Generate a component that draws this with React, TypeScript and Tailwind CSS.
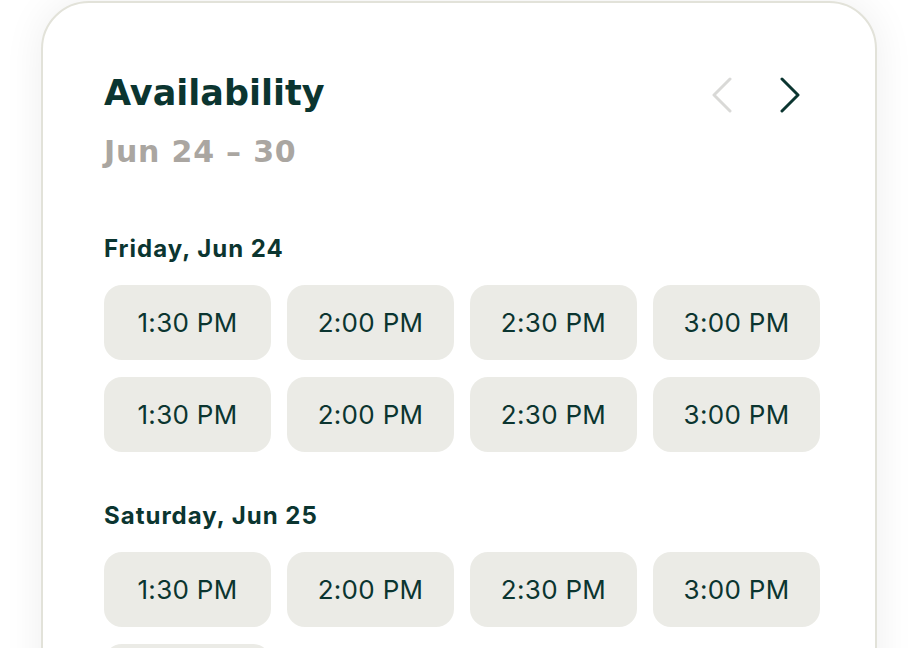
import React from 'react';

const slots = ['1:30 PM', '2:00 PM', '2:30 PM', '3:00 PM'];

const days = [
  { label: 'Friday, Jun 24', times: [...slots, ...slots] },
  { label: 'Saturday, Jun 25', times: [...slots, '1:30 PM'] },
];

function Chevron({ dir, color }: { dir: 'left' | 'right'; color: string }) {
  return (
    <svg width="22" height="36" viewBox="0 0 22 36" fill="none" stroke={color} strokeWidth="3" strokeLinecap="round" strokeLinejoin="round">
      {dir === 'left' ? <path d="M19 2 L3 18 L19 34" /> : <path d="M3 2 L19 18 L3 34" />}
    </svg>
  );
}

export default function App() {
  return (
    <div className="w-[918px] h-[648px] overflow-hidden bg-white">
      <div className="ml-[41px] mt-px w-[836px] h-[760px] bg-white border-2 border-[#e2e2d9] rounded-[48px] shadow-[0_0_40px_rgba(0,0,0,0.07)] pl-[61px] pr-[55px] pt-[73px]">
        {/* Header */}
        <div className="flex items-start justify-between">
          <div>
            <div className="text-[35px] leading-none font-bold text-[#0b3530]" style={{ fontFamily: '"DejaVu Sans", sans-serif' }}>
              Availability
            </div>
            <div className="mt-[26px] text-[30px] leading-none font-bold text-[#aaa6a1] tracking-[0.8px]" style={{ fontFamily: '"DejaVu Sans", sans-serif' }}>
              Jun 24 – 30
            </div>
          </div>
          <div className="flex items-center gap-[46px] pt-[1px] pr-[19px]">
            <Chevron dir="left" color="#d9d9d7" />
            <Chevron dir="right" color="#0b3530" />
          </div>
        </div>

        {/* Days */}
        <div className="mt-[70px] flex flex-col gap-[52px]">
          {days.map((d) => (
            <div key={d.label}>
              <div className="text-[24px] leading-none font-bold text-[#0b3530] tracking-[1px]" style={{ fontFamily: 'Inter, sans-serif' }}>
                {d.label}
              </div>
              <div className="mt-[24px] grid grid-cols-4 gap-x-[16px] gap-y-[17px]">
                {d.times.map((s, i) => (
                  <button
                    key={i}
                    className="h-[75px] rounded-[18px] bg-[#ebebe6] text-[26px] text-[#0b3530] tracking-[0.3px] flex items-center justify-center"
                    style={{ fontFamily: 'Inter, sans-serif' }}
                  >
                    {s}
                  </button>
                ))}
              </div>
            </div>
          ))}
        </div>
      </div>
    </div>
  );
}
